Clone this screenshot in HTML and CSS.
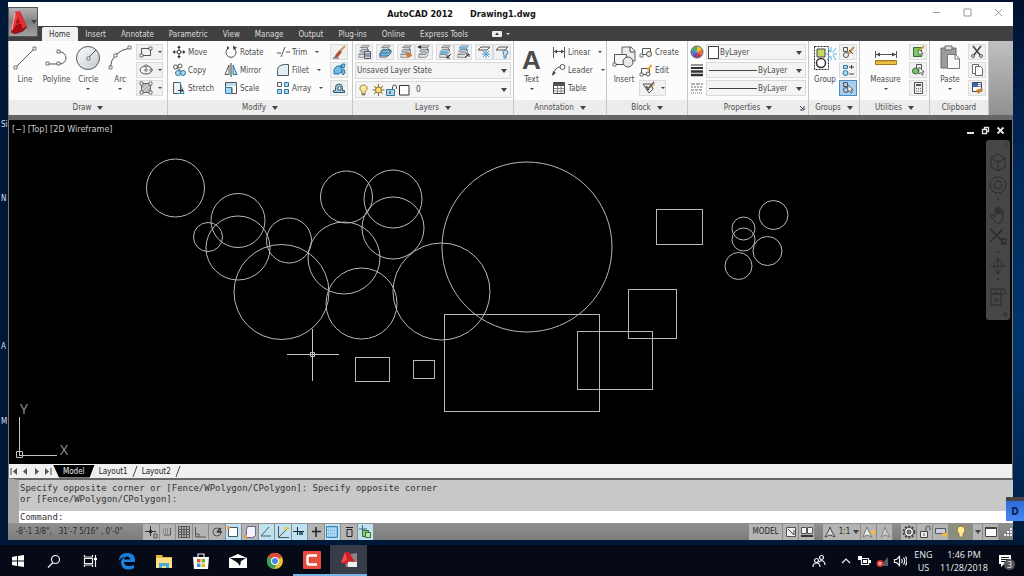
FILE: index.html
```html
<!DOCTYPE html>
<html lang="en">
<head>
  <meta charset="UTF-8">
  <title>AutoCAD 2012 - Drawing1.dwg</title>
  <meta name="viewport" content="width=device-width, initial-scale=1.0">
  <link rel="stylesheet" href="styles.css">
</head>
<body>
  <!-- Shared icons -->
  <svg class="sprite" aria-hidden="true">
    <defs>
      <linearGradient id="red-face" x1="0" y1="0" x2="1" y2="1">
        <stop offset="0" stop-color="#ff7a78"/><stop offset="0.5" stop-color="#dc1c26"/><stop offset="1" stop-color="#8c0c14"/>
      </linearGradient>
      <linearGradient id="disc" x1="0" y1="0" x2="1" y2="1">
        <stop offset="0" stop-color="#fff"/><stop offset="1" stop-color="#c2c8ce"/>
      </linearGradient>
    </defs>
    <symbol id="i-layers" viewBox="0 0 16 16">
      <path d="M4 3l2-2h8l-2 2zM3 7l2-2h8l-2 2zM2 11l2-2h8l-2 2z" fill="#eef1f4" stroke="#6a7580"/>
      <path d="M2 12v2h8l3-3M12 3v3M13 5v4" fill="none" stroke="#6a7580"/>
    </symbol>
    <symbol id="i-cursor" viewBox="0 0 8 10"><path d="M1 0v8l2-2 1.500 3 1.500-.8-1.500-2.700H7z" fill="#fff" stroke="#333" stroke-width=".8"/></symbol>
  </svg>

  <!-- Desktop icons showing at the left edge -->
  <div class="desktop-labels">
    <span class="label-1">Si</span>
    <span class="label-2">N</span>
    <span class="label-3">A</span>
    <span class="label-4">M</span>
  </div>

  <div class="window">
    <header class="titlebar">
      <button class="app-button" aria-label="Application menu">
        <svg width="18" height="24" viewBox="0 0 18 24"><path d="M1 22L5 2l5-1 7 16-5 2-2-4-4 2-1 6z" fill="url(#red-face)"/><path d="M5 2l5-1 7 16-5 2-2-5z" fill="#e0303a"/><path d="M1 22l4-3 1-3 5-2 1 5 5-2-4 4-8 3z" fill="#a40f18" stroke="#7c0a10" stroke-width=".6"/><path d="M6 13l2-5 2 5z" fill="#a40f18"/><path d="M5 3L2 20" stroke="#ffb0a8" stroke-width="1"/></svg>
        <i class="arrow"></i>
      </button>
      <h1>AutoCAD 2012</h1>
      <h1>Drawing1.dwg</h1>
      <div class="window-buttons">
        <button aria-label="Minimize"><svg width="9" height="9"><path d="M1 4.500h7"/></svg></button>
        <button aria-label="Maximize"><svg width="9" height="9"><path d="M1 1h7v7H1z"/></svg></button>
        <button aria-label="Close"><svg width="9" height="9"><path d="M1 1l7 7M8 1L1 8"/></svg></button>
      </div>
    </header>

    <nav class="ribbon-tabs">
      <button class="active">Home</button>
      <button>Insert</button>
      <button>Annotate</button>
      <button>Parametric</button>
      <button>View</button>
      <button>Manage</button>
      <button>Output</button>
      <button>Plug-ins</button>
      <button>Online</button>
      <button>Express Tools</button>
      <button class="ribbon-toggle" aria-label="Minimize ribbon"><svg width="10" height="6"><rect width="10" height="6" rx="1" fill="#eee"/><path d="M3 4l2-2.500L7 4z" fill="#333"/></svg><i class="dot light"></i></button>
    </nav>

    <div class="ribbon">
      <!-- Draw -->
      <section class="panel draw">
        <div class="panel-body">
          <button class="big"><svg width="24" height="26" viewBox="0 0 24 26"><path d="M3 22L21 4" class="ln"/><path d="M1 21h3v3H1zM20 2h3v3h-3z" class="grip"/></svg>Line</button>
          <button class="big"><svg width="24" height="26" viewBox="0 0 24 26"><path d="M2 19h13a6 6 0 0 0 0-12h-2" class="ln"/><path d="M1 17h3v3H1zM12 5h3v3h-3zM12 17h3v3h-3z" class="grip"/></svg>Polyline</button>
          <button class="big"><svg width="26" height="26" viewBox="0 0 26 26"><circle cx="13" cy="13" r="11.500" fill="url(#disc)" stroke="#555"/><path d="M13 13l8-8" class="ln"/><path d="M12 12h3v3h-3z" class="grip"/></svg>Circle<i class="dot"></i></button>
          <button class="big"><svg width="24" height="26" viewBox="0 0 24 26"><path d="M2 23Q4 6 22 3" class="ln"/><path d="M1 21h3v3H1zM6 9h3v3H6zM20 1h3v3h-3z" class="grip"/></svg>Arc<i class="dot"></i></button>
          <div class="stack">
            <button class="split" aria-label="Rectangle"><svg width="16" height="16"><path d="M3.500 4.500h9v7h-9z" class="ln"/><path d="M2 10h3v3H2zM11 3h3v3h-3z" class="grip"/></svg><i class="dot"></i></button>
            <button class="split" aria-label="Ellipse"><svg width="16" height="16"><ellipse cx="8" cy="8" rx="6" ry="4" class="ln"/><path d="M7 7h2v2H7zM7 3h2v2H7zM12 7h2v2h-2z" class="grip"/></svg><i class="dot"></i></button>
            <button class="split" aria-label="Hatch"><svg width="16" height="16"><path d="M3.500 3.500h9v9h-9z" fill="#ccc" stroke="#666"/><path d="M4 8l4-4M4 12l8-8M8 12l4-4" stroke="#999"/><path d="M2 2h3v3H2zM11 2h3v3h-3zM2 11h3v3H2zM11 11h3v3h-3z" class="grip"/></svg><i class="dot"></i></button>
          </div>
        </div>
        <h2>Draw <i class="arrow"></i></h2>
      </section>

      <!-- Modify -->
      <section class="panel modify">
        <div class="panel-body">
          <div class="stack col">
            <button class="tool"><svg width="14" height="14"><path d="M7 1v12M1 7h12" stroke="#444" stroke-width="1.200"/><path d="M5 3l2-2.500L9 3zM5 11l2 2.500L9 11zM3 5L.5 7 3 9zM11 5l2.500 2L11 9z" fill="#444"/><path d="M5.500 5.500h3v3h-3z" fill="#fff" stroke="#555"/></svg>Move</button>
            <button class="tool"><svg width="14" height="14"><circle cx="3.500" cy="4" r="2" class="ln"/><circle cx="8" cy="3" r="2" class="ln"/><circle cx="6" cy="10" r="2.500" class="blue"/><circle cx="11" cy="10" r="2.500" class="blue"/><path d="M5 5l4 3" class="ln"/></svg>Copy</button>
            <button class="tool"><svg width="14" height="14"><path d="M1.500 1.500h7v11h-7z" fill="#e9f3fa" stroke="#555"/><path d="M6 1.500l2 0 4 11H5" fill="none" stroke="#3c8dbe"/><path d="M6 9.500h5M9 7.500l2 2-2 2" stroke="#333" fill="none"/></svg>Stretch</button>
          </div>
          <div class="stack col">
            <button class="tool"><svg width="14" height="14"><path d="M9.500 3A5 5 0 1 1 4.500 3" class="ln"/><path d="M9 .5l4 2.200-3.500 2.300z" fill="#444"/><path d="M3 1l2.500 2L3 5" fill="#444"/></svg>Rotate</button>
            <button class="tool"><svg width="14" height="14"><path d="M5 2v9.500H1z" class="ln"/><path d="M9 2v9.500h4z" class="blue"/><path d="M7 0v14" stroke="#333"/></svg>Mirror</button>
            <button class="tool"><svg width="14" height="14"><path d="M1.500 1.500h11v11H8v-6H1.500z" class="ln"/><path d="M1.500 6.500h6v6h-6z" class="blue"/><path d="M2 2l10 0 0 3H2z" fill="#b8dcf0"/></svg>Scale</button>
          </div>
          <div class="stack col wide">
            <button class="tool"><svg width="14" height="14"><path d="M1 8h4M10 7h4M9 2L5 12" class="ln"/></svg>Trim<i class="dot"></i></button>
            <button class="tool"><svg width="14" height="14"><path d="M1.500 12.500v-5q0-6 8-6h3v11z" fill="#e2eef6" stroke="#555"/></svg>Fillet<i class="dot"></i></button>
            <button class="tool"><svg width="14" height="14"><path d="M1.500 1.500h4v4h-4z" class="ln"/><path d="M8.500 1.500h4v4h-4zM1.500 8.500h4v4h-4zM8.500 8.500h4v4h-4z" class="blue"/></svg>Array<i class="dot"></i></button>
          </div>
          <div class="stack">
            <button class="mini" aria-label="Erase"><svg width="14" height="14"><path d="M13 1L7 7" stroke="#c8a060" stroke-width="2"/><path d="M8 5l2 2-4 5-4 1 2-4z" fill="#b0522e"/><path d="M1 13h6" stroke="#555"/></svg></button>
            <button class="mini" aria-label="Explode"><svg width="14" height="14"><path d="M2 6l3-3h5v5l-3 3H2zM8 4l2-3h3l-1 4zM9 9l3-3 1 4-2 2z" fill="#6fbbe2" stroke="#2878a8"/></svg></button>
            <button class="mini" aria-label="Offset"><svg width="14" height="14"><path d="M1.500 11.500h11v-2h-2v-3a3.500 3.500 0 0 0-7 0v3h-2z" fill="#9cc8e0" stroke="#3a5a70"/><path d="M6 9V7a1.500 1.500 0 0 1 3 0v2z" fill="#fff" stroke="#3a5a70"/></svg></button>
          </div>
        </div>
        <h2>Modify <i class="arrow"></i></h2>
      </section>

      <!-- Layers -->
      <section class="panel layers">
        <div class="panel-body stack">
          <div class="layer-tools">
            <button class="mini" aria-label="Layer properties"><svg width="14" height="14"><use href="#i-layers"/><path d="M7.500 6.500h6v7h-6z" fill="#dde" stroke="#556"/><path d="M8 9h5M8 11h5" stroke="#556"/></svg></button>
            <button class="mini" aria-label="Make current"><svg width="14" height="14"><use href="#i-layers"/><path d="M2 8l3-3h8l-3 3zM2 8v3h8l3-3V5" fill="#7ab8e0" stroke="#2d6e9c"/></svg></button>
            <span class="pair">
              <button class="mini" aria-label="Match"><svg width="14" height="14"><use href="#i-layers"/><path d="M6 8l6 0 1 3-4 2z" fill="#d07830"/></svg></button>
              <button class="mini" aria-label="Previous"><svg width="14" height="14"><use href="#i-layers"/><path d="M0 2l4-2v4z" fill="#333"/></svg></button>
            </span>
            <span class="pair">
              <button class="mini" aria-label="Isolate"><svg width="14" height="14"><use href="#i-layers"/><path d="M3 6l7 0-2 3H1z" fill="#6ab4e0"/><path d="M13 9l-4 4M9 10v3h3" stroke="#333" fill="none"/></svg></button>
              <button class="mini" aria-label="Unisolate"><svg width="14" height="14"><use href="#i-layers"/><path d="M4 2l8 0-2 2H3z" fill="#6ab4e0"/><path d="M9 13l4-4M13 12V9h-3" stroke="#333" fill="none"/></svg></button>
            </span>
            <span class="pair">
              <button class="mini" aria-label="Freeze"><svg width="14" height="14"><path d="M1 5l3-3h9l-3 3z" class="ln"/><path d="M9 5v8M5 9h8M6 6l6 6M12 6l-6 6" stroke="#4f9fd0"/></svg></button>
              <button class="mini" aria-label="Off"><svg width="14" height="14"><path d="M1 5l3-3h9l-3 3z" class="ln"/><path d="M8 8a2.500 2.500 0 1 1 3 2v3H9v-3z" fill="#c5dff2" stroke="#4b7fa8"/></svg></button>
            </span>
          </div>
          <div class="combo"><select aria-label="Layer state"><option>Unsaved Layer State</option></select></div>
          <div class="combo">
            <svg width="52" height="14" viewBox="0 0 52 14"><path d="M4 9Q1 6 2 4a4 4 0 0 1 7 0q1 2-2 5v3H4z" fill="#ffe79a" stroke="#9a8648"/><path d="M4 11h3" stroke="#555"/><path d="M20.500 1v12M14.500 7h12M16 3l9 8M25 3l-9 8" stroke="#8a6a30"/><circle cx="20.500" cy="7" r="3" fill="#ffe070" stroke="#8a6a30"/><path d="M28.500 6.500h8v6h-8z" class="blue"/><path d="M34.500 6V4a2 2 0 0 1 4 0v2" class="ln"/><path d="M32 8v3" stroke="#333"/><path d="M41.500 2.500h9.500v9.500h-9.500z" fill="#fff" stroke="#333"/></svg>
            <select aria-label="Layer"><option>0</option></select>
          </div>
        </div>
        <h2>Layers <i class="arrow"></i></h2>
      </section>

      <!-- Annotation -->
      <section class="panel annotation">
        <div class="panel-body">
          <button class="big"><span class="letter">A</span>Text<i class="dot"></i></button>
          <div class="stack col">
            <button class="tool"><svg width="14" height="14"><path d="M1.500 2v11M12.500 2v11M2 6.500h10" class="ln"/><path d="M2 6.500l3-2v4zM12 6.500l-3-2v4z" fill="#444"/></svg>Linear<i class="dot"></i></button>
            <button class="tool"><svg width="14" height="14"><path d="M1 12q2-8 7-8" class="ln"/><circle cx="10.500" cy="4" r="2.500" class="ln"/><path d="M0 13l1-5 3 2z" fill="#444"/></svg>Leader<i class="dot"></i></button>
            <button class="tool"><svg width="14" height="14"><path d="M1.500 1.500h11v11h-11z" fill="#fff" stroke="#444"/><path d="M1 2h12v3H1z" fill="#555"/><path d="M2 7.500h10M2 10h10M5.500 5v7M9 5v7" stroke="#888"/></svg>Table</button>
          </div>
        </div>
        <h2>Annotation <i class="arrow"></i></h2>
      </section>

      <!-- Block -->
      <section class="panel block">
        <div class="panel-body">
          <button class="big"><svg width="24" height="26" viewBox="0 0 24 26"><path d="M10 2h9l4 4v10H10z" fill="#e8eaec" stroke="#666"/><path d="M18 2v5h5" class="ln"/><path d="M2.500 9.500h12v10h-12z" fill="#f4f5f6" stroke="#555"/><circle cx="16" cy="17" r="5" fill="#e8eaec" stroke="#555"/><path d="M1 18h3v3H1z" class="grip"/></svg>Insert</button>
          <div class="stack col">
            <button class="tool"><svg width="14" height="14"><path d="M3.500 3.500h8v6h-8z" class="ln"/><circle cx="10" cy="9" r="2.500" fill="#eee" stroke="#555"/><path d="M1 9h3v3H1z" class="grip"/></svg>Create</button>
            <button class="tool"><svg width="14" height="14"><path d="M2.500 5.500h8v6h-8z" class="ln"/><circle cx="9" cy="11" r="2" fill="#eee" stroke="#555"/><path d="M8 6l4-5 1 2-4 5z" fill="#f0a030"/><path d="M1 10h3v3H1z" class="grip"/></svg>Edit</button>
            <button class="split" aria-label="Edit attributes"><svg width="16" height="16"><path d="M2 4l8 0 2 5-4 4z" fill="#eee" stroke="#555"/><path d="M6 10l7-8M5 6l3 4" stroke="#555" stroke-width="1.500"/><path d="M9 8l5-4" stroke="#c89830"/></svg><i class="dot"></i></button>
          </div>
        </div>
        <h2>Block <i class="arrow"></i></h2>
      </section>

      <!-- Properties -->
      <section class="panel properties">
        <div class="panel-body stack">
          <div class="property">
            <svg width="14" height="14"><path d="M7 7V1a6 6 0 0 1 5.200 3z" fill="#f0c030"/><path d="M7 7l5.200-3a6 6 0 0 1 0 6z" fill="#e87830"/><path d="M7 7l5.200 3A6 6 0 0 1 7 13z" fill="#c83850"/><path d="M7 7v6a6 6 0 0 1-5.200-3z" fill="#7048b0"/><path d="M7 7l-5.200 3a6 6 0 0 1 0-6z" fill="#3888c8"/><path d="M7 7L1.800 4A6 6 0 0 1 7 1z" fill="#50b060"/><circle cx="7" cy="7" r="6" fill="none" stroke="#666"/></svg>
            <div class="combo"><i class="swatch"></i><select aria-label="Object color"><option>ByLayer</option></select></div>
          </div>
          <div class="property">
            <svg width="14" height="14"><path d="M1 2h12" stroke="#333"/><path d="M1 5h12" stroke="#333" stroke-width="2"/><path d="M1 8.500h12M1 12h12" stroke="#333" stroke-width="2.500"/></svg>
            <div class="combo"><i class="rule"></i><select aria-label="Lineweight"><option>ByLayer</option></select></div>
          </div>
          <div class="property">
            <svg width="14" height="14"><path d="M1 3h12" stroke="#666" stroke-dasharray="4 1"/><path d="M1 6h12" stroke="#666" stroke-dasharray="2 1"/><path d="M1 9h12" stroke="#666" stroke-dasharray="3 1"/><path d="M1 12h12" stroke="#666" stroke-dasharray="1 1"/></svg>
            <div class="combo"><i class="rule"></i><select aria-label="Linetype"><option>ByLayer</option></select></div>
          </div>
        </div>
        <h2>Properties <i class="arrow"></i><svg class="launcher" width="6" height="6"><path d="M1 1l4 4M5 1v4H1" stroke="#444" fill="none"/></svg></h2>
      </section>

      <!-- Groups -->
      <section class="panel groups">
        <div class="panel-body">
          <button class="big"><svg width="24" height="26" viewBox="0 0 24 26"><path d="M1.500 1.500h14v23h-14z" fill="none" stroke="#222" stroke-dasharray="2 1"/><path d="M4 4h8v8H4z" fill="#c4dc60" stroke="#445"/><circle cx="8" cy="18" r="4.500" fill="#fff" stroke="#333" stroke-width="1.500"/><path d="M13 9h11M15 3l8 12M23 3l-9 12M18 2v13" stroke="#58b4e4"/><circle cx="18" cy="9" r="2" fill="#fff"/></svg>Group</button>
          <div class="stack">
            <button class="mini" aria-label="Ungroup"><svg width="14" height="14"><path d="M2.500 2.500h4v4h-4z" class="ln"/><circle cx="5" cy="10" r="2.500" class="ln"/><path d="M13 2L7 9" stroke="#c09040" stroke-width="2"/><path d="M8 5l4 4" stroke="#444"/></svg></button>
            <button class="mini" aria-label="Group edit"><svg width="14" height="14"><path d="M2.500 2.500h4v3h-4z" class="blue"/><circle cx="4.500" cy="10" r="2.500" class="blue"/><path d="M8 4h5M10.500 2v4M8 11h5" stroke="#444"/></svg></button>
            <button class="mini on" aria-label="Group selection"><svg width="14" height="14"><path d="M2.500 1.500h4v4h-4z" class="ln"/><circle cx="5" cy="9" r="2.500" class="ln"/><use href="#i-cursor" x="6" y="4" width="7" height="9"/></svg></button>
          </div>
        </div>
        <h2>Groups <i class="arrow"></i></h2>
      </section>

      <!-- Utilities -->
      <section class="panel utilities">
        <div class="panel-body">
          <button class="big"><svg width="24" height="26" viewBox="0 0 24 26"><path d="M1.500 6v7M22.500 6v7M2 9.500h20" class="ln"/><path d="M2 9.500l4-2v4zM22 9.500l-4-2v4z" fill="#444"/><path d="M1.500 15.500h21v4h-21z" fill="#f0c040" stroke="#a07820"/><path d="M4 15v2M7 15v2M10 15v2M13 15v2M16 15v2M19 15v2" stroke="#a07820"/></svg>Measure<i class="dot"></i></button>
          <div class="stack">
            <button class="mini" aria-label="Select all"><svg width="14" height="14"><path d="M2.500 2.500h8v9h-8z" fill="#7cc468" stroke="#3c6c30"/><path d="M8 6l5-5" stroke="#e0a030" stroke-width="2"/><use href="#i-cursor" x="7" y="4" width="6" height="8"/></svg></button>
            <button class="mini" aria-label="Quick select"><svg width="14" height="14"><path d="M5.500 1.500h5v5h-5z" class="ln"/><circle cx="4.500" cy="8" r="3" fill="#7cc468" stroke="#3c6c30"/><use href="#i-cursor" x="7" y="4" width="7" height="9"/></svg></button>
            <button class="mini" aria-label="Calculator"><svg width="14" height="14"><path d="M3.500 1.500h8v11h-8z" fill="#eee" stroke="#555"/><path d="M5 4h5" stroke="#555" stroke-width="2"/><path d="M5 7.500h5M5 10h5" stroke="#666" stroke-dasharray="1 1"/></svg></button>
          </div>
        </div>
        <h2>Utilities <i class="arrow"></i></h2>
      </section>

      <!-- Clipboard -->
      <section class="panel clipboard">
        <div class="panel-body">
          <button class="big"><svg width="24" height="26" viewBox="0 0 24 26"><path d="M3 3h15v20H3z" fill="#999da0" stroke="#666"/><path d="M7 1h7v4H7z" fill="#ddd" stroke="#666"/><path d="M9.500 9.500h8l4 4v10h-12z" fill="#fafafa" stroke="#777"/><path d="M17 9.500v4.500h4.500" fill="none" stroke="#777"/></svg>Paste<i class="dot"></i></button>
          <div class="stack">
            <button class="mini" aria-label="Cut"><svg width="14" height="14"><path d="M3 1l7 9M11 1L4 10" stroke="#444" stroke-width="1.500"/><circle cx="3" cy="11" r="1.500" class="ln"/><circle cx="11" cy="11" r="1.500" class="ln"/></svg></button>
            <button class="mini" aria-label="Copy clip"><svg width="14" height="14"><path d="M2.500 1.500h6v9h-6z" fill="#fff" stroke="#666"/><path d="M5.500 3.500h5l2 2v7h-7z" fill="#fff" stroke="#666"/></svg></button>
            <button class="mini" aria-label="Match properties"><svg width="14" height="14"><path d="M2.500 1.500h9v9h-9z" fill="#fff" stroke="#446"/><path d="M3 2h5v4H3z" fill="#3a6cb0"/><path d="M8 3.500h3M8 5.500h3" stroke="#88a"/><path d="M6 9l6-2 1 2-5 4z" fill="#d08030"/></svg></button>
          </div>
        </div>
        <h2>Clipboard</h2>
      </section>
    </div>

    <!-- Drawing area -->
    <main class="canvas">
      <p class="viewport-label">[−] [Top] [2D Wireframe]</p>
      <div class="doc-buttons">
        <button aria-label="Minimize drawing"><svg width="9" height="9"><path d="M1 7h7" stroke-width="2"/></svg></button>
        <button aria-label="Restore drawing"><svg width="9" height="9"><path d="M1.500 3.500h4v4h-4zM3.500 3V1.500h4v4H6" stroke-width="1.300"/></svg></button>
        <button aria-label="Close drawing"><svg width="9" height="9"><path d="M1.500 1.500l6 6M7.500 1.500l-6 6" stroke-width="1.800"/></svg></button>
      </div>
      <svg class="drawing" width="1004" height="344" viewBox="9 120 1004 344">
        <g class="shapes">
          <circle cx="175.500" cy="188" r="29"/>
          <circle cx="238" cy="220.500" r="27"/>
          <circle cx="208" cy="237" r="14.500"/>
          <circle cx="238" cy="248" r="32"/>
          <circle cx="289" cy="240.500" r="22.500"/>
          <circle cx="281.500" cy="292" r="47.500"/>
          <circle cx="346.500" cy="197" r="26"/>
          <circle cx="393" cy="199" r="29"/>
          <circle cx="393" cy="228" r="31"/>
          <circle cx="344" cy="258" r="36"/>
          <circle cx="361.500" cy="303.500" r="35.500"/>
          <circle cx="441.500" cy="291.500" r="48.500"/>
          <circle cx="527" cy="247" r="85"/>
          <circle cx="773.500" cy="215" r="14.500"/>
          <circle cx="743.500" cy="228.500" r="11.500"/>
          <circle cx="743.500" cy="239.500" r="11.500"/>
          <circle cx="767.500" cy="251" r="14.500"/>
          <circle cx="738.500" cy="266" r="13.500"/>
          <rect x="656.500" y="209.500" width="46" height="35"/>
          <rect x="628.500" y="289.500" width="48" height="49"/>
          <rect x="577.500" y="331.500" width="75" height="58"/>
          <rect x="444.500" y="314.500" width="155" height="97"/>
          <rect x="355.500" y="357.500" width="34" height="24"/>
          <rect x="413.500" y="360.500" width="21" height="18"/>
        </g>
        <!-- Crosshair -->
        <path class="cross" d="M287 354.500h52M312.500 329v52M310.500 352.500h4v4h-4z"/>
        <!-- UCS icon -->
        <path class="cross" d="M16.500 451.500h6v6h-6zM19.500 417v38M19 455.500h38"/>
        <text x="20" y="414">Y</text>
        <text x="60" y="455">X</text>
      </svg>
      <div class="navbar">
        <svg width="24" height="180" viewBox="0 0 24 180" fill="none" stroke="#2c2c2c">
          <path d="M18 4h4M19 7h3"/>
          <path d="M12 14l7 4v9l-7 4-7-4v-9zM5 18l7 4 7-4M12 22v9"/>
          <circle cx="12" cy="45" r="8"/><circle cx="12" cy="45" r="4"/>
          <path d="M11 59h2M11 112h2M11 139h2" stroke-width="1.500"/>
          <path d="M8 80l-4-5 2-1 3 3v-8q1-2 2 0v5-6q1-2 2 0v6-5q1-2 2 0v5l1-3q2-1 1 1v6l-3 5H10z"/>
          <path d="M4 89l14 14M17 89L4 102M16 99h4v5h-4z" stroke-width="1.500"/>
          <path d="M12 118v16M4 126h16M9 122l3-4 3 4M9 130l3 4 3-4M8 123v6M16 123v6"/>
          <path d="M5 149h14v5H5zM5 154h10v11H5zM10 149v5M15 149v5M9 158l4 2-4 2z"/>
          <path d="M18 173h3v3h-3z"/>
        </svg>
      </div>
    </main>

    <!-- Model / layout tabs -->
    <div class="layout-tabs">
      <button class="step" aria-label="First"><svg width="9" height="9"><path d="M1 1v7" stroke="#444"/><path d="M7 1v7L3 4.500z"/></svg></button>
      <button class="step" aria-label="Previous"><svg width="9" height="9"><path d="M6 1v7L2 4.500z"/></svg></button>
      <button class="step" aria-label="Next"><svg width="9" height="9"><path d="M3 1v7l4-3.500z"/></svg></button>
      <button class="step" aria-label="Last"><svg width="9" height="9"><path d="M2 1v7l4-3.500z"/><path d="M8 1v7" stroke="#444"/></svg></button>
      <button class="sheet active">Model</button>
      <button class="sheet">Layout1</button>
      <svg class="slash" width="6" height="13"><path d="M1 12L5 1"/></svg>
      <button class="sheet">Layout2</button>
      <svg class="slash" width="6" height="13"><path d="M1 12L5 1"/></svg>
    </div>

    <!-- Command window -->
    <section class="command">
      <div class="history">Specify opposite corner or [Fence/WPolygon/CPolygon]: Specify opposite corner<br>or [Fence/WPolygon/CPolygon]:</div>
      <div class="prompt"><label for="cmd">Command:</label><input type="text" id="cmd"></div>
    </section>

    <footer class="status">
      <span class="coords">-8'-1 3/8",&nbsp;&nbsp; 31'-7 5/16" , 0'-0"</span>
      <div class="toggles">
        <button aria-label="Infer"><svg width="14" height="14"><path d="M6.500 1v10M1 6.500h11" stroke="#333"/><path d="M5 5h3v3H5z" fill="#333"/><path d="M10 9h3v4h-3z" class="ln"/></svg></button>
        <button aria-label="Snap"><svg width="14" height="14"><path d="M3 4h6M3 6h6M3 8h6" stroke="#666" stroke-dasharray="1 1"/><path d="M10.500 3v7H4" class="ln"/></svg></button>
        <button aria-label="Grid"><svg width="14" height="14"><path d="M1.500 1.500h11v11h-11zM4.500 1v12M7 1v12M9.500 1v12M1 4.500h12M1 7h12M1 9.500h12" class="ln"/></svg></button>
        <button aria-label="Ortho"><svg width="14" height="14"><path d="M2.500 2v10H13M3 9h3v3" class="ln"/></svg></button>
        <button aria-label="Polar"><svg width="14" height="14"><circle cx="7" cy="7" r="4" class="ln"/><path d="M7 7h5M7 7l4-4" stroke="#333" stroke-width="1.500"/></svg></button>
        <button class="on" aria-label="Object snap"><svg width="14" height="14"><path d="M2.500 2.500h9v9h-9z" fill="#fff" stroke="#456"/><path d="M1 1h3v3H1z" fill="#e8a050"/></svg></button>
        <button aria-label="3D object snap"><svg width="14" height="14"><path d="M4.500 1.500h8v9l-3 2h-6v-8z" fill="#f4f4ff" stroke="#668"/><path d="M1 10h3v3H1z" fill="#e8a050"/></svg></button>
        <button class="on" aria-label="Object tracking"><svg width="14" height="14"><path d="M10 2L2 11h10" class="ln"/></svg></button>
        <button class="on" aria-label="Dynamic UCS"><svg width="14" height="14"><path d="M2.500 1v11.500H13M3 12l8-8" class="ln"/><path d="M9 2h4v3H9z" fill="#e8c040"/></svg></button>
        <button class="on" aria-label="Dynamic input"><svg width="14" height="14"><path d="M5.500 2v8M1 6.500h11" stroke="#223"/><path d="M7 7h4v3H7z" fill="#356a84"/></svg></button>
        <button aria-label="Lineweight"><svg width="14" height="14"><path d="M7 2v10M3 6.500h9" stroke="#222" stroke-width="1.500"/></svg></button>
        <button class="on" aria-label="Transparency"><svg width="14" height="14"><path d="M1.500 1.500h11v11h-11z" fill="#8cc4ec" stroke="#3f83b0"/><path d="M2 4h10M2 7h10M2 10h10" stroke="#fff" stroke-dasharray="1 1"/></svg></button>
        <button aria-label="Quick properties"><svg width="14" height="14"><path d="M4 2.500h7M5 4.500h5v7H5z" stroke="#222" fill="none"/></svg></button>
        <button class="on" aria-label="Selection cycling"><svg width="14" height="14"><path d="M4.500 0v8M1 4h8" stroke="#356a84"/><path d="M4.500 5.500h6v6h-6z" fill="#8ccc7c" stroke="#3c6c30"/><path d="M7.500 7.500h5v5h-5z" fill="#bde4b0" stroke="#3c6c30"/></svg></button>
      </div>
      <div class="status-right">
        <button class="model">MODEL</button>
        <button aria-label="Layout"><svg width="14" height="14"><path d="M2.500 2.500h9v9h-9z" fill="#eee" stroke="#555"/><path d="M4 4l6 6V5" stroke="#444" fill="none"/></svg></button>
        <button aria-label="Quick view"><svg width="14" height="14"><path d="M1.500 2.500h5v6h-5zM7.500 2.500h5v6h-5z" fill="#f4f4f4" stroke="#555"/><path d="M1 11h12" stroke="#333" stroke-width="2"/></svg></button>
        <span class="gap"></span>
        <button class="scale"><svg width="12" height="14"><path d="M6 2l2 5 3 5-5-2-5 2 3-5z" fill="#ddd" stroke="#444"/></svg>1:1<i class="arrow"></i></button>
        <button aria-label="Annotation visibility"><svg width="14" height="14"><path d="M5 2l2 5 3 5-5-2-4 2 2-5z" fill="#eee" stroke="#777"/><path d="M11 5v5M9 7.500h5" stroke="#f0c030" stroke-width="2"/></svg></button>
        <button aria-label="Auto scale"><svg width="14" height="14"><path d="M7 2l2 5 3 5-5-2-4 2 2-5z" fill="#ccc" stroke="#888"/></svg></button>
        <span class="gap"></span>
        <button aria-label="Workspace"><svg width="14" height="14"><circle cx="7" cy="7" r="5.500" fill="none" stroke="#444" stroke-width="2" stroke-dasharray="2 1.500"/><circle cx="7" cy="7" r="4.500" fill="#eee" stroke="#444"/><circle cx="7" cy="7" r="2" fill="#888" stroke="#444"/></svg></button>
        <button aria-label="Lock"><svg width="14" height="14"><path d="M2.500 6.500h7v6h-7z" fill="#eee" stroke="#444"/><path d="M8 6V3a2 2 0 0 1 4 0v2M6 8v3" class="ln"/></svg></button>
        <button aria-label="Hardware"><svg width="14" height="14"><path d="M1.500 3.500h10v5h-10z" fill="#ccd" stroke="#556"/><path d="M10.500 7v5M8 9.500h5" stroke="#f0c030" stroke-width="2"/></svg></button>
        <button class="bulb" aria-label="Isolate objects"><svg width="14" height="14"><path d="M5 9Q3 7 3 5a4 4 0 0 1 8 0q0 2-2 4v3H5z" fill="#ffe890" stroke="#8a7a40"/></svg></button>
        <button class="narrow" aria-label="More"><i class="arrow"></i></button>
        <button aria-label="Clean screen"><svg width="14" height="14"><path d="M1.500 2.500h11v9h-11z" fill="#fff" stroke="#444"/><path d="M1 3h12" stroke="#444" stroke-width="2"/></svg></button>
        <svg class="size-grip" width="10" height="12"><path d="M8 2v2M8 5v2M5 5v2M8 8v2M5 8v2M2 8v2" stroke="#eee" stroke-width="2"/></svg>
      </div>
    </footer>
  </div>

  <button class="d-widget">D</button>

  <!-- Windows taskbar -->
  <div class="taskbar">
    <button class="sys" aria-label="Start"><svg width="14" height="14"><path d="M1 3l5-1v4.500H1zM7 2l6-1v5.500H7zM1 7.500h5V12l-5-1zM7 7.500h6V13l-6-1z" fill="#fff"/></svg></button>
    <button class="sys" aria-label="Search"><svg width="14" height="14"><circle cx="8.500" cy="5.500" r="4" class="wl"/><path d="M6 8.500L1 13.500" class="wl"/></svg></button>
    <button class="sys" aria-label="Task view"><svg width="14" height="14"><path d="M1.500 4.500h8v5h-8zM1.500 1v2h8V1M1.500 13v-2h8v2M12.500 1v12" class="wl"/><path d="M11 4h3v2h-3z" fill="#fff"/></svg></button>
    <button class="app" aria-label="Edge"><svg width="18" height="18"><path d="M1 9Q1 1 9 1q8 0 8 7v2H6q0 4 5 4 3 0 5-1v3q-2 1.500-6 1.500-7-.5-7-7Q3 7 7 5 3 5 1 9zM6 7.500h6q0-3-3-3-2.500 0-3 3z" fill="#1a80e0"/></svg></button>
    <button class="app" aria-label="Explorer"><svg width="18" height="16"><path d="M1 2h6l1 2h9v11H1z" fill="#e8b840"/><path d="M1 5h16v10H1z" fill="#fbe088"/><path d="M4 15v-5h10v5h-3v-2H7v2z" fill="#48a8d8"/></svg></button>
    <button class="app" aria-label="Store"><svg width="18" height="18"><path d="M6 5V2h6v3" class="wl"/><path d="M1 5h16l-1 12H2z" fill="#fff"/><path d="M5 7h3.500v3.500H5z" fill="#e85030"/><path d="M9.500 7H13v3.500H9.500z" fill="#70b030"/><path d="M5 11.500h3.500V15H5z" fill="#2898e0"/><path d="M9.500 11.500H13V15H9.500z" fill="#f0b020"/></svg></button>
    <button class="app" aria-label="Mail"><svg width="20" height="16"><path d="M1 5l9-4 9 4v10H1z" fill="#fff"/><path d="M2 5h16l-8 5z" fill="#0a0f18"/><path d="M9 9l3 4 1-5z" fill="#0a0f18"/></svg></button>
    <button class="app" aria-label="Chrome"><svg width="18" height="18"><circle cx="9" cy="9" r="8" fill="#e8c030"/><path d="M9 9L2 5a8 8 0 0 1 14 0z" fill="#df4a38"/><path d="M9 9L2 5a8 8 0 0 0 6 12l4-7z" fill="#3ba058"/><circle cx="9" cy="9" r="4" fill="#fff"/><circle cx="9" cy="9" r="3" fill="#4a88e8"/></svg></button>
    <button class="app open" aria-label="Camtasia"><svg width="18" height="18"><rect width="18" height="18" rx="1" fill="#e84c3c"/><path d="M14 4.500H6q-1.500 0-1.500 1.500v6q0 1.500 1.500 1.500h8" fill="none" stroke="#fff" stroke-width="2.500"/></svg></button>
    <button class="app open current" aria-label="AutoCAD"><svg width="18" height="18"><path d="M4 4l13-2v14H6z" fill="#888"/><path d="M8 11h9v5H8z" fill="#eee"/><path d="M1 12L5 1h4l6 10-6-1-3 3z" fill="#d41c28"/><path d="M5 1l2 8-6 3z" fill="#f05050"/></svg></button>

    <div class="tray">
      <svg class="people" width="14" height="14"><circle cx="9.500" cy="3.500" r="2" class="wl"/><circle cx="4.500" cy="6.500" r="2" class="wl"/><path d="M1 13q0-4 3.500-4T8 13M7 8q2-2 4-1 2 1 2 4" class="wl"/></svg>
      <svg width="14" height="14"><path d="M3 9l4-4 4 4" class="wl"/></svg>
      <svg width="14" height="14"><path d="M4.500 4.500h7v6h-7z" class="wl"/><path d="M6 6h4v3H6zM12 6h2v3h-2zM1 2h4v4H1z" fill="#fff"/></svg>
      <svg width="14" height="14"><path d="M5 12h8V3z" fill="#555b62"/><circle cx="5" cy="9.500" r="3.500" fill="#d83030"/><path d="M3.500 8l3 3M6.500 8l-3 3" stroke="#fff"/></svg>
      <svg width="14" height="14"><path d="M1.500 5.500h2l3-3v9l-3-3h-2zM8.500 5q1.500 2 0 4M10.500 3.500q2.500 3.500 0 7M12.500 2.500q3 4.500 0 9" class="wl"/></svg>
      <div class="lang">ENG<br>US</div>
      <div class="clock">1:46 PM<br>11/28/2018</div>
      <button class="notify" aria-label="Notifications"><svg width="14" height="14"><path d="M1 1h12v9H6l-3 3v-3H1z" fill="#fff"/><path d="M3 3.500h8M3 5.500h8M3 7.500h5" stroke="#222"/></svg><span class="badge">3</span></button>
    </div>
  </div>
</body>
</html>
```

FILE: styles.css
```css
:root {
  --ui-font: "DejaVu Sans Condensed", "DejaVu Sans", sans-serif;
  --dark: #404040;
  --text: #4c4c4c;
  --line: #c6c6c6;
  --panel-title: #ececec;
  --accent: #a8cff0;
}

* {
  box-sizing: border-box;
  margin: 0;
  padding: 0;
}

body {
  position: relative;
  display: flex;
  flex-direction: column;
  height: 100vh;
  overflow: hidden;
  background: linear-gradient(90deg, #001838 0, #001838 50%, transparent 50%),
              linear-gradient(#001030, #002a5c 30%, #00356e 60%, #002450 85%, #001228);
  font-family: var(--ui-font);
  font-size: 8px;
  color: var(--text);
}

button, select, input {
  font: inherit;
  color: inherit;
  background: none;
  border: none;
  outline: none;
}

h1, h2 {
  font-size: inherit;
}

svg {
  display: block;
  flex: none;
}

.sprite {
  position: absolute;
  width: 0;
  height: 0;
}

/* Icon strokes */
.ln { fill: none; stroke: #555; }
.grip { fill: #fff; stroke: #555; stroke-width: .8; }
.blue { fill: #a8d8f0; stroke: #32789e; }
.wl { fill: none; stroke: #f0f0f0; stroke-width: 1.2; }

.arrow {
  display: inline-block;
  border: 3px solid transparent;
  border-top: 4px solid #444;
  border-bottom: none;
}

.dot {
  border: 2px solid transparent;
  border-top: 2px solid #444;
  border-bottom: none;
}
.dot.light { border-top-color: #ddd; }

/* Desktop */
.desktop-labels span {
  position: absolute;
  left: 1px;
  color: #dde;
}
.label-1 { top: 120px; }
.label-2 { top: 194px; }
.label-3 { top: 342px; }
.label-4 { top: 417px; }

/* Window */
.window {
  position: relative;
  display: flex;
  flex-direction: column;
  flex: 1;
  min-height: 0;
  margin: 2px 11px 5px 8px;
  background: #777;
}

.titlebar {
  position: relative;
  display: flex;
  justify-content: center;
  align-items: center;
  gap: 17px;
  height: 24px;
  padding-right: 98px;
  background: #fff;
  color: #111;
  font-size: 9px;
}

.app-button {
  position: absolute;
  left: 0;
  top: 5px;
  display: flex;
  align-items: center;
  gap: 3px;
  width: 30px;
  height: 30px;
  padding-left: 1px;
  background: linear-gradient(#b4b4b4, #808080 50%, #a0a0a0);
  border: 1px solid #555;
}

.window-buttons {
  position: absolute;
  right: 10px;
  top: 6px;
  display: flex;
  gap: 22px;
}
.window-buttons path { fill: none; stroke: #999; }

/* Ribbon tabs */
.ribbon-tabs {
  display: flex;
  align-items: flex-end;
  height: 15px;
  padding-left: 34px;
  background: var(--dark);
  color: #ddd;
}
.ribbon-tabs button {
  height: 14px;
  padding: 0 8px 0 7px;
}
.ribbon-tabs .active {
  background: #f2f2f2;
  color: #333;
  border-radius: 2px 2px 0 0;
}
.ribbon-tabs .ribbon-toggle {
  display: flex;
  align-items: center;
  gap: 4px;
  padding-left: 16px;
}

/* Ribbon */
.ribbon {
  display: flex;
  padding-left: 1px;
  background: linear-gradient(#c0c0c0, #909090);
  border-bottom: 5px solid #666;
}
.panel {
  flex: none;
  border-right: 1px solid var(--line);
  background: #fcfcfc;
}
.panel-body {
  display: flex;
  height: 59px;
  padding: 3px 2px 0;
}
.panel h2 {
  position: relative;
  display: flex;
  justify-content: center;
  align-items: center;
  gap: 6px;
  height: 15px;
  background: var(--panel-title);
  font-weight: normal;
}
.launcher {
  position: absolute;
  right: 3px;
}

.draw { width: 159px; }
.modify { width: 185px; }
.layers { width: 161px; }
.annotation { width: 93px; }
.block { width: 81px; }
.properties { width: 121px; }
.groups { width: 51px; }
.utilities { width: 70px; }
.clipboard { width: 59px; }

.stack {
  display: flex;
  flex-direction: column;
  gap: 2px;
}
.stack.col { width: 52px; }
.stack.wide { width: 54px; }
.block .stack.col { width: 46px; }

.big {
  display: flex;
  flex-direction: column;
  align-items: center;
  flex: 1;
  padding-top: 1px;
}
.big svg { margin-bottom: 4px; }
.big .dot { margin-top: 4px; }
.letter {
  height: 30px;
  font: bold 26px/30px "Liberation Sans", sans-serif;
}

.tool {
  display: flex;
  align-items: center;
  gap: 2px;
  height: 16px;
  white-space: nowrap;
}
.tool .dot { margin-left: 6px; }

.split, .mini {
  display: flex;
  align-items: center;
  justify-content: center;
  height: 16px;
  background: #f1f1f1;
  border: 1px solid #dcdcdc;
}
.split {
  width: 27px;
  gap: 4px;
}
.mini { width: 18px; }
.mini.on {
  background: var(--accent);
  border-color: #4a8cc4;
}

.draw .panel-body { padding: 3px 4px 0 0; }
.modify .panel-body { padding-left: 4px; }
.annotation .big { padding-right: 5px; }
.stack { flex: none; }

.layer-tools {
  display: flex;
  justify-content: space-between;
}
.pair { display: flex; }

.combo {
  position: relative;
  display: flex;
  align-items: center;
  flex: 1;
  max-height: 17px;
  min-width: 0;
  background: #f4f4f4;
  border: 1px solid #dadada;
}
.combo::after {
  content: "";
  position: absolute;
  right: 3px;
  top: 6px;
  border: 3px solid transparent;
  border-top: 4px solid #444;
  border-bottom: none;
  pointer-events: none;
}
.combo select {
  flex: 1;
  min-width: 0;
  height: 15px;
  padding-left: 1px;
  appearance: none;
}
.layers .combo { min-height: 17px; }
.layers .combo svg { margin-left: 2px; }
.layers .combo svg + select { padding-left: 6px; }

.property {
  display: flex;
  align-items: center;
  gap: 2px;
  height: 16px;
}
.property .combo { height: 16px; }
.swatch {
  width: 11px;
  height: 13px;
  margin-left: 1px;
  background: #fff;
  border: 1px solid #444;
}
.rule {
  width: 48px;
  margin-left: 2px;
  border-top: 1px solid #444;
}

/* Drawing area */
.canvas {
  position: relative;
  flex: 1;
  min-height: 0;
  margin: 0 1px;
  overflow: hidden;
  background: #000;
}
.viewport-label {
  position: absolute;
  left: 3px;
  top: 4px;
  color: #ccc;
  font-size: 9px;
}
.doc-buttons {
  position: absolute;
  right: 7px;
  top: 6px;
  display: flex;
  gap: 6px;
}
.doc-buttons path { fill: none; stroke: #e4e4e4; }
.shapes {
  fill: none;
  stroke: #b8b8b8;
}
.cross {
  fill: none;
  stroke: #c4c4c4;
}
.drawing text {
  fill: #999;
  font: 14px "Open Sans", sans-serif;
}
.navbar {
  position: absolute;
  right: 2px;
  top: 20px;
  width: 24px;
  height: 180px;
  border-radius: 3px;
  background: #464646;
}

/* Layout tabs */
.layout-tabs {
  display: flex;
  align-items: center;
  height: 14px;
  margin: 0 1px;
  background: #f0f0f0;
  color: #222;
}
.step {
  display: flex;
  justify-content: center;
  width: 11px;
}
.step path { fill: #555; }
.sheet {
  height: 13px;
  padding: 0 4px;
}
.sheet.active {
  padding: 0 10px;
  background: #000;
  color: #eee;
  clip-path: polygon(0 0, 100% 0, calc(100% - 5px) 100%, 6px 100%);
}
.slash path { stroke: #444; }

/* Command window */
.command {
  border-top: 2px solid #666;
  border-left: 11px solid #a8a8a8;
  background: #c8c8c8;
  color: #333;
  font: 9px/11px "DejaVu Sans Mono", monospace;
}
.history {
  height: 31px;
  padding: 3px 1px;
}
.prompt {
  display: flex;
  height: 12px;
  padding-left: 1px;
  background: #fff;
  line-height: 13px;
}
.prompt input {
  flex: 1;
  padding-left: 4px;
}

/* Status bar */
.status {
  display: flex;
  align-items: center;
  height: 17px;
  background: linear-gradient(#909090, #7c7c7c);
  color: #2a2a2a;
}
.coords {
  width: 135px;
  padding-left: 8px;
  white-space: nowrap;
}
.toggles {
  display: flex;
  width: 231px;
}
.toggles button, .status-right button {
  display: flex;
  align-items: center;
  justify-content: center;
  height: 16px;
  background: #b4b4b4;
  border-right: 1px solid #8a8a8a;
}
.toggles button { flex: 1; }
.toggles .on { background: #bfe2f2; }
.status-right {
  display: flex;
  align-items: center;
  margin-left: auto;
}
.status-right button { width: 16px; }
.status-right .model { width: 34px; }
.status-right .scale {
  width: 38px;
  gap: 3px;
}
.status-right .bulb {
  width: 24px;
  background: #8e8e80;
}
.status-right .narrow { width: 10px; }
.gap { width: 8px; }
.size-grip { margin-left: 4px; }

.d-widget {
  position: absolute;
  right: 0;
  top: 497px;
  width: 18px;
  height: 24px;
  background: linear-gradient(#2e6ad8, #4488f0);
  border-top: 4px solid #444;
  color: #0a1c50;
  font-weight: bold;
  font-size: 10px;
}

/* Taskbar */
.taskbar {
  display: flex;
  flex: none;
  height: 31px;
  background: #050a16;
  color: #eee;
}
.sys, .app {
  display: flex;
  align-items: center;
  justify-content: center;
}
.sys { width: 36px; }
.app { width: 37px; }
.app.open { border-bottom: 2px solid #76b4e8; }
.app.current { background: #363c48; }

.tray {
  display: flex;
  align-items: center;
  gap: 4px;
  margin-left: auto;
  padding-right: 12px;
  font: 9px/13px "Open Sans", sans-serif;
  text-align: center;
}
.people { margin-right: 9px; }
.lang { width: 25px; }
.clock { width: 48px; white-space: nowrap; }
.notify {
  position: relative;
  margin-left: 6px;
}
.badge {
  position: absolute;
  left: 6px;
  top: 5px;
  width: 11px;
  height: 11px;
  border-radius: 50%;
  background: #555;
  line-height: 11px;
}
```
